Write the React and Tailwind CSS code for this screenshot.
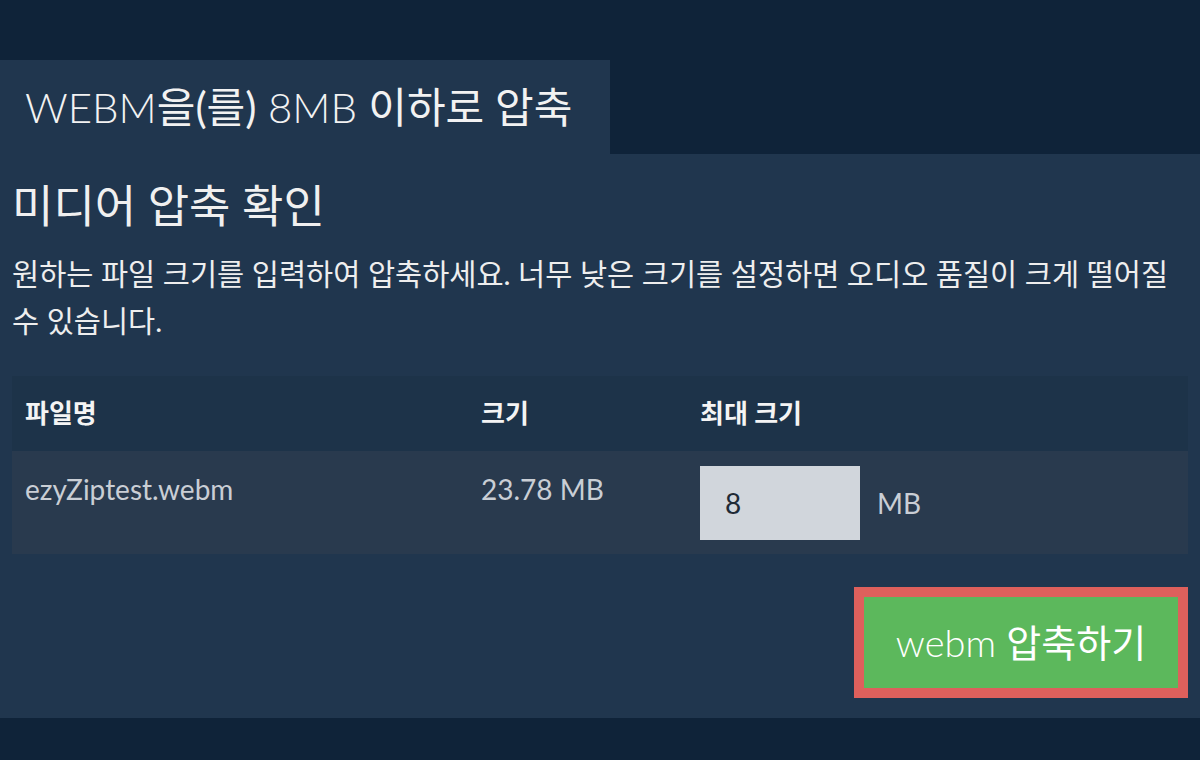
export default function App() {
  const font = { fontFamily: "Lato, 'Noto Sans CJK KR', sans-serif" };
  return (
    <div className="w-[1200px] h-[760px] bg-[#0f2339] pt-[60px]" style={font}>
      <div className="w-[610px] h-[94px] bg-[#20364e] flex items-center pl-[25px]">
        <h1 className="text-[42px] font-light text-[#f2f2f2] leading-none">
          WEBM<span className="font-normal">을(를)</span> 8MB <span className="font-normal">이하로 압축</span>
        </h1>
      </div>
      <div className="h-[564px] bg-[#20364e] px-[12px] pt-[26px]">
        <h2 className="text-[45px] leading-[52px] font-normal text-[#f0f0f0]">미디어 압축 확인</h2>
        <p className="mt-[18px] text-[29.5px] leading-[47px] text-[#eeeeee]">
          원하는 파일 크기를 입력하여 압축하세요. 너무 낮은 크기를 설정하면 오디오 품질이 크게 떨어질 수 있습니다.
        </p>
        <div className="mt-[32px]">
          <div className="flex h-[75px] bg-[#1d3349] items-center text-[26px] font-bold text-[#f4f4f4]">
            <div className="w-[456px] pl-[13px]">파일명</div>
            <div className="w-[219px] pl-[13px]">크기</div>
            <div className="flex-1 pl-[13px]">최대 크기</div>
          </div>
          <div className="flex h-[103px] bg-[#293a4e] text-[28px] leading-[34px] text-[#c9ced5]">
            <div className="w-[456px] pl-[13px] pt-[21px]">ezyZiptest.webm</div>
            <div className="w-[219px] pl-[13px] pt-[21px]">23.78 MB</div>
            <div className="flex-1 pl-[13px] pt-[15px] flex items-center self-start">
              <div className="w-[160px] h-[74px] bg-[#d1d6dc] flex items-center pl-[25px] text-[28px] text-[#1f2a36]">8</div>
              <span className="ml-[17px] text-[#c9ced5]">MB</span>
            </div>
          </div>
        </div>
        <div className="flex justify-end mt-[33px]">
          <button className="w-[334px] h-[111px] border-[10px] border-[#de605c] bg-[#5cb85c] text-white text-[38px] font-light flex items-center justify-center">
            <span>webm <span className="font-normal">압축하기</span></span>
          </button>
        </div>
      </div>
    </div>
  );
}
